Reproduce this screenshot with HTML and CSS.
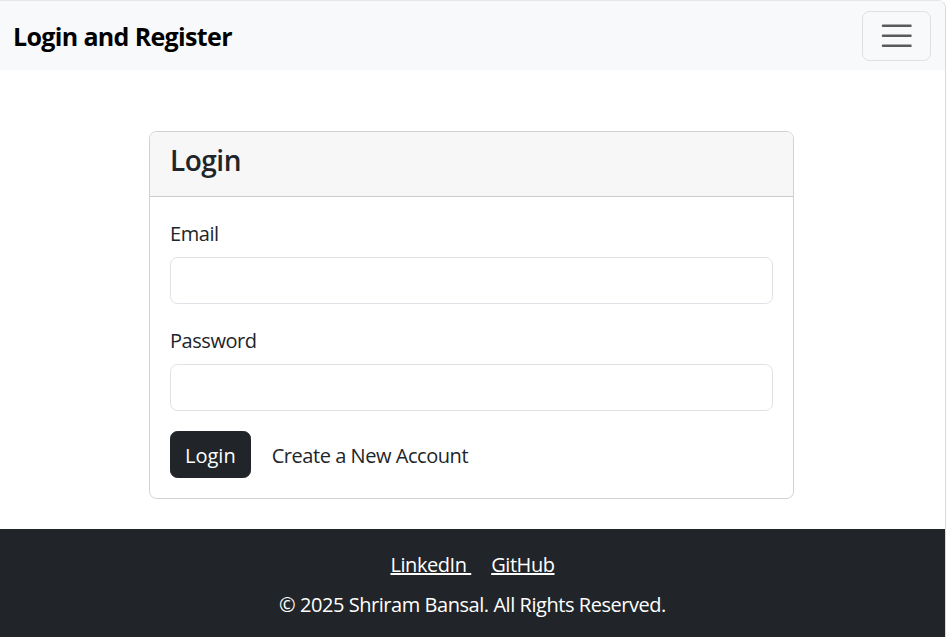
FILE: index.html
```html
<!DOCTYPE html>
<html lang="en">
<head>
<meta charset="utf-8">
<title>Login and Register</title>
<link rel="stylesheet" href="styles.css">
</head>
<body>
<div class="window">
  <nav class="navbar">
    <a class="brand" href="#">Login and Register</a>
    <button class="toggler" type="button" aria-label="Toggle navigation">
      <svg width="37.5" height="37.5" viewBox="0 0 30 30" aria-hidden="true"><path d="M4 7h22M4 15h22M4 23h22" stroke="rgba(33,37,41,0.75)" stroke-width="2" stroke-linecap="round" stroke-miterlimit="10"/></svg>
    </button>
  </nav>
  <main class="main">
    <div class="card">
      <div class="card-header"><h3 class="card-title">Login</h3></div>
      <form class="card-body">
        <div class="field">
          <label class="label" for="email">Email</label>
          <input class="input" id="email" type="email">
        </div>
        <div class="field">
          <label class="label" for="password">Password</label>
          <input class="input" id="password" type="password">
        </div>
        <div class="actions">
          <button class="btn-dark" type="button">Login</button>
          <a class="link" href="#">Create a New Account</a>
        </div>
      </form>
    </div>
  </main>
  <footer class="footer">
    <div class="social"><a href="#">LinkedIn&nbsp;</a><a href="#">GitHub</a></div>
    <p class="copy">© 2025 Shriram Bansal. All Rights Reserved.</p>
  </footer>
</div>
</body>
</html>
```
FILE: styles.css
```css
html, body {
  margin: 0;
  padding: 0;
  background: #fff;
}
body {
  font-family: "Open Sans", "Noto Sans", sans-serif;
  font-size: 20px;
  line-height: 1.5;
  letter-spacing: -0.45px;
  color: #212529;
}
.window {
  width: 945px;
  height: 636px;
  border-top: 1px solid #e6e6e6;
  border-right: 1px solid #d9d9d9;
  border-top-right-radius: 8px;
  overflow: hidden;
  display: flex;
  flex-direction: column;
}
.navbar {
  height: 69px;
  background: #f8f9fa;
  display: flex;
  align-items: center;
  justify-content: space-between;
  padding: 0 14px 0 13px;
  box-sizing: border-box;
}
.brand {
  font-size: 25px;
  font-weight: 700;
  letter-spacing: -0.65px;
  color: #000;
  text-decoration: none;
  padding-top: 2px;
}
.toggler {
  width: 69px;
  height: 50px;
  padding: 0;
  background: transparent;
  border: 1px solid rgba(0,0,0,0.1);
  border-radius: 7.5px;
  display: flex;
  align-items: center;
  justify-content: center;
}
.toggler svg { display: block; }
.main {
  padding: 61px 0 30px;
}
.card {
  width: 645px;
  margin: 0 0 0 149px;
  box-sizing: border-box;
  border: 1px solid rgba(0,0,0,0.175);
  border-radius: 7.5px;
  overflow: hidden;
}
.card-header {
  background: #f7f7f7;
  border-bottom: 1px solid rgba(0,0,0,0.175);
  padding: 12px 20px 8px;
}
.card-title {
  margin: 0 0 10px;
  font-size: 28px;
  font-weight: 600;
  letter-spacing: -0.5px;
  line-height: 1.2;
}
.card-body {
  padding: 20px;
  margin: 0;
}
.field { margin-bottom: 20px; }
.label {
  display: block;
  padding-top: 2px;
  margin-bottom: 8px;
}
.input {
  display: block;
  width: 100%;
  box-sizing: border-box;
  height: 47px;
  border: 1px solid #dee2e6;
  border-radius: 7.5px;
  font: inherit;
  padding: 7.5px 15px;
  background: #fff;
}
.actions {
  display: flex;
  align-items: center;
  gap: 21px;
}
.btn-dark {
  height: 47px;
  padding: 9px 14px 6px;
  font: inherit;
  color: #fff;
  background: #212529;
  border: 1px solid #212529;
  border-radius: 7.5px;
}
.link {
  color: #212529;
  text-decoration: none;
  padding-top: 3px;
}
.footer {
  flex: 1;
  background: #212529;
  color: #fff;
  text-align: center;
  padding: 21px 0 0;
}
.social {
  display: flex;
  justify-content: center;
  gap: 20px;
}
.social a { color: #fff; }
.copy { margin: 10px 0 0; }
```
